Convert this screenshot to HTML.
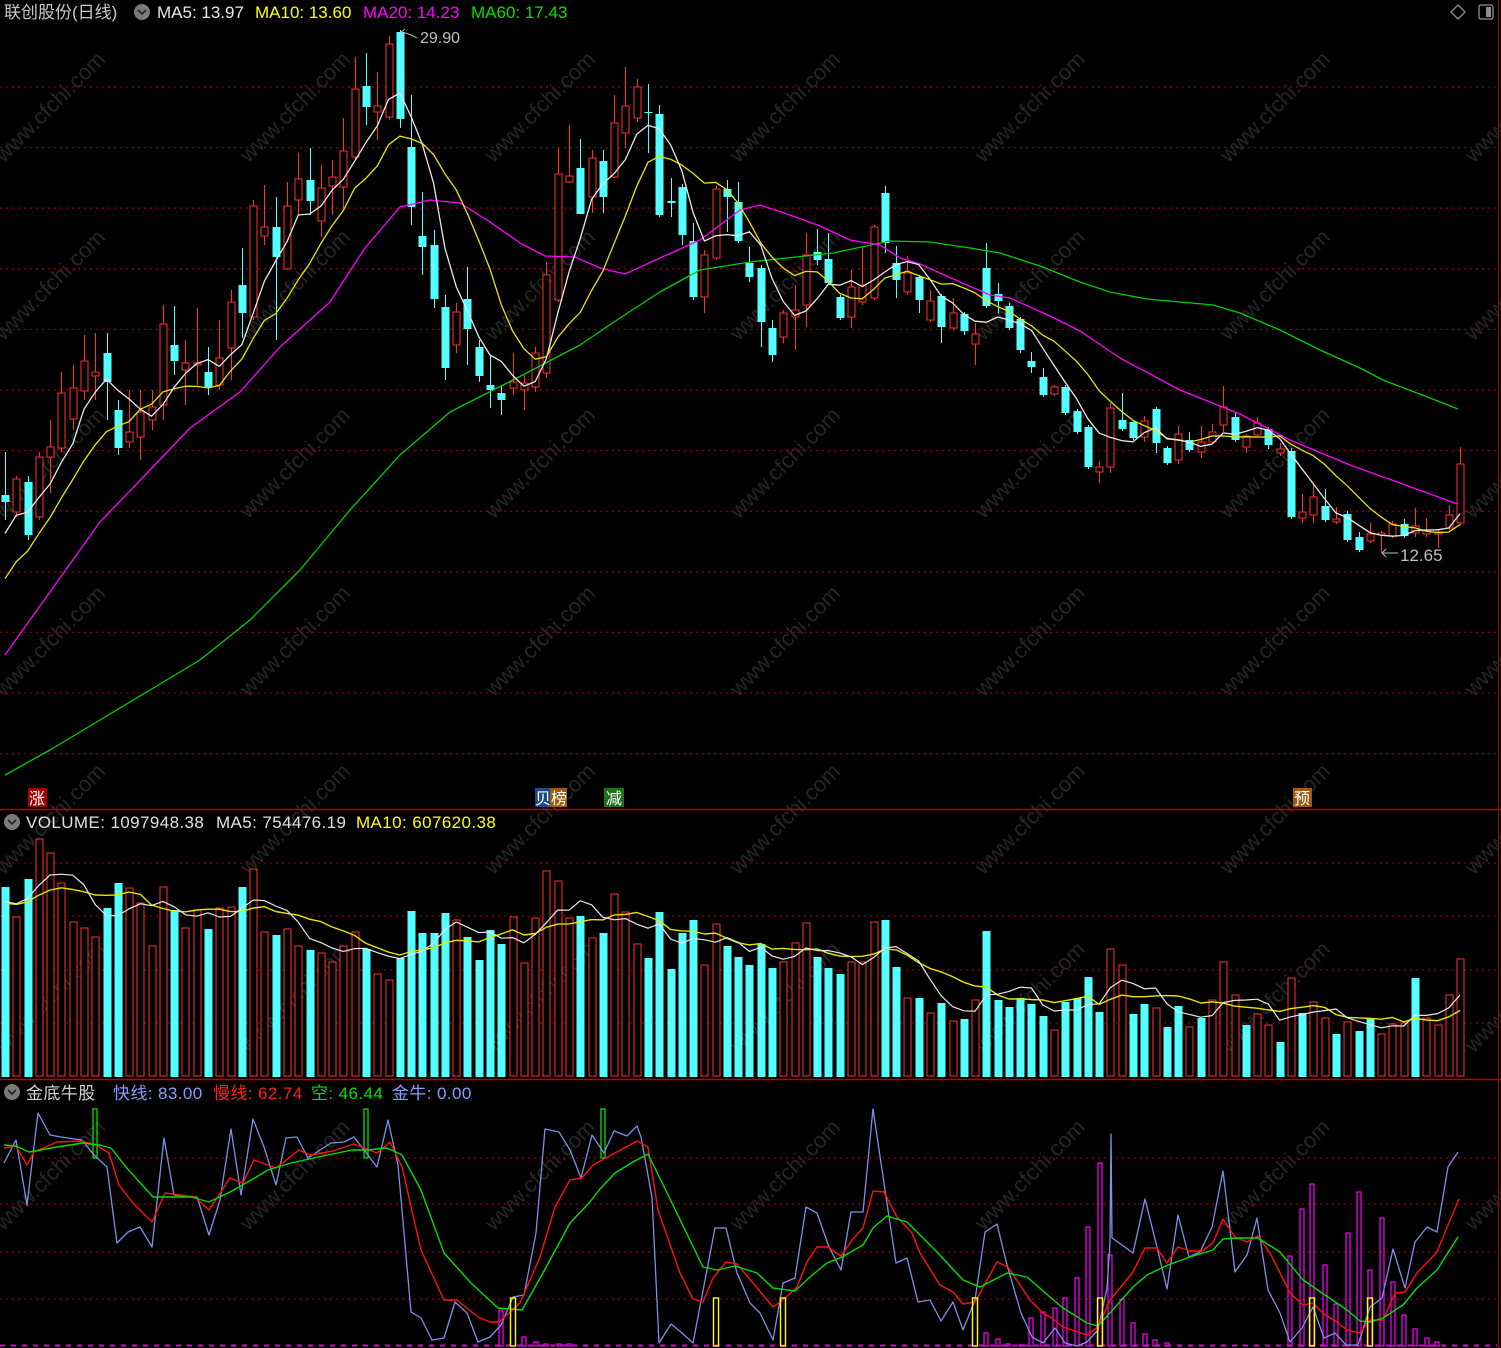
<!DOCTYPE html>
<html><head><meta charset="utf-8"><style>
html,body{margin:0;padding:0;background:#000;width:1501px;height:1348px;overflow:hidden}
svg{display:block}
text{font-family:"Liberation Sans","Noto Sans CJK SC",sans-serif}
</style></head><body>
<svg id="s" xmlns="http://www.w3.org/2000/svg" width="1501" height="1348" viewBox="0 0 1501 1348">
<rect width="1501" height="1348" fill="#000"/>
<g id="wm"></g>
<g id="grid"></g>
<g id="main"></g>
<g id="vol"></g>
<g id="ind"></g>
<line x1="0" y1="809.5" x2="1501" y2="809.5" stroke="#c00000" stroke-width="1.5"/>
<line x1="0" y1="1079.5" x2="1501" y2="1079.5" stroke="#c00000" stroke-width="1.5"/>
<line x1="1498.5" y1="0" x2="1498.5" y2="1348" stroke="#a00000" stroke-width="1"/>
<g font-size="17">
<text x="4" y="18" fill="#c8c8c8">联创股份(日线)</text>
<circle cx="142" cy="12" r="8" fill="#7a7a7a"/><path d="M138 10 L142 14 L146 10" stroke="#222" stroke-width="1.6" fill="none"/>
<text x="157" y="18" fill="#e8e8e8">MA5: 13.97</text>
<text x="255" y="18" fill="#ffff00">MA10: 13.60</text>
<text x="363" y="18" fill="#ff00ff">MA20: 14.23</text>
<text x="471" y="18" fill="#00e000">MA60: 17.43</text>
<circle cx="12" cy="822" r="8" fill="#7a7a7a"/><path d="M8 820 L12 824 L16 820" stroke="#222" stroke-width="1.6" fill="none"/>
<g letter-spacing="0.4">
<text x="26" y="828" fill="#e0e0e0">VOLUME: 1097948.38</text>
<text x="216" y="828" fill="#e0e0e0">MA5: 754476.19</text>
<text x="356" y="828" fill="#ffff00">MA10: 607620.38</text>
</g>
<circle cx="12" cy="1092" r="8" fill="#7a7a7a"/><path d="M8 1090 L12 1094 L16 1090" stroke="#222" stroke-width="1.6" fill="none"/>
<g letter-spacing="0.4">
<text x="26" y="1099" fill="#d0d0d0">金底牛股</text>
<text x="113" y="1099" fill="#8c9cff">快线: 83.00</text>
<text x="213" y="1099" fill="#ff2020">慢线: 62.74</text>
<text x="311" y="1099" fill="#00e000">空: 46.44</text>
<text x="392" y="1099" fill="#8c9cff">金牛: 0.00</text>
</g>
</g>
<path d="M1458 5 L1465 12 L1458 19 L1451 12 Z" stroke="#909090" fill="none" stroke-width="1.3"/>
<rect x="1479" y="5" width="14" height="14" rx="2" stroke="#909090" fill="none" stroke-width="1.3"/><rect x="1486" y="7" width="5" height="10" fill="#909090"/>
<path d="M417 38 Q408 33 401 32" stroke="#c0c0c0" fill="none"/><path d="M401 32 L405 29 M401 32 L404 35" stroke="#c0c0c0"/>
<text x="420" y="43" font-size="16" fill="#c0c0c0">29.90</text>
<path d="M1382 553 L1398 553 M1382 553 L1386 549 M1382 553 L1386 557" stroke="#c0c0c0" fill="none"/>
<text x="1400" y="561" font-size="17" fill="#c0c0c0">12.65</text>
<rect x="28" y="788" width="19" height="19" fill="#a00000"/><text x="29" y="804" font-size="16" fill="#fff">涨</text>
<rect x="535" y="788" width="15" height="19" fill="#1a4a8a"/><rect x="550" y="788" width="17" height="19" fill="#a05a10"/><text x="535" y="804" font-size="16" fill="#fff">贝榜</text>
<rect x="604" y="788" width="20" height="19" fill="#1f6f1f"/><text x="606" y="804" font-size="16" fill="#fff">减</text>
<rect x="1293" y="788" width="19" height="19" fill="#a05a10"/><text x="1294" y="804" font-size="16" fill="#fff">预</text>
</svg>
<script>
(function(){
var NS="http://www.w3.org/2000/svg";
function el(p,t,a){var e=document.createElementNS(NS,t);for(var k in a)e.setAttribute(k,a[k]);p.appendChild(e);return e;}
var G=function(id){return document.getElementById(id)};
var wm=G('wm');
for(var r=0;r<7;r++)for(var c=0;c<7;c++){var cx=55+245*c,cy=112+178*r;
var t=el(wm,'text',{x:cx,y:cy,fill:'#262626','font-size':'22','text-anchor':'middle',transform:'rotate(-45 '+cx+' '+cy+')'});t.textContent='www.cfchi.com';}
var g=G('grid');
function hl(y,col){el(g,'line',{x1:0,x2:1497,y1:y,y2:y,stroke:col||'#8b0000','stroke-width':1.3,'stroke-dasharray':'2,4'});}
for(var k=0;k<12;k++)hl(87+60.6*k);
[863,916,970,1023].forEach(function(y){hl(y)});
[1158,1204,1252,1299].forEach(function(y){hl(y)});
el(g,'line',{x1:0,x2:1497,y1:1345.5,y2:1345.5,stroke:'#e000e0','stroke-width':2,'stroke-dasharray':'5,6'});
var X=function(i){return 5+i*11.28};
var C="c 495 502 452 520|r 479 512 476 517|c 482 535 476 540|r 457 517 452 520|r 447 457 420 493|r 393 448 372 452|r 388 419 365 430|r 361 391 335 400|r 372 376 333 400|c 353 382 333 420|c 410 448 400 455|r 432 442 390 448|r 412 437 390 460|r 407 420 390 430|r 324 405 305 420|c 345 361 306 375|r 363 370 340 405|r 363 365 308 385|c 372 387 347 395|r 358 385 320 390|r 302 348 290 380|c 285 313 248 338|r 206 317 200 320|r 227 236 185 245|c 227 257 197 340|r 206 269 182 270|r 179 200 153 215|c 180 201 148 215|r 188 221 165 237|r 177 186 160 215|r 151 187 118 210|r 89 157 57 160|c 86 107 53 125|r 106 112 72 140|r 44 117 36 120|c 32 119 30 128|c 147 207 95 225|c 236 247 192 275|c 245 299 230 308|c 307 368 295 380|r 312 345 303 353|c 299 329 267 365|c 347 376 340 382|c 385 390 355 408|c 393 400 385 415|r 382 388 353 395|r 383 390 375 410|r 353 387 347 392|r 275 373 262 378|r 174 300 148 302|r 176 182 125 183|c 168 214 139 214|r 158 197 150 213|c 161 197 150 213|r 123 177 95 178|r 106 133 67 148|r 87 118 79 122|c 112 113 84 153|c 114 215 105 217|c 201 203 178 217|c 187 235 184 245|c 241 297 223 300|r 255 297 250 313|r 189 258 186 260|c 189 197 180 232|c 202 241 182 243|c 263 277 247 282|c 268 322 265 347|c 328 355 320 362|r 313 337 310 343|r 310 317 285 350|r 255 305 233 327|c 252 260 229 265|c 259 283 233 285|c 297 318 295 320|r 287 317 270 328|r 285 302 247 305|r 227 298 225 300|c 193 243 186 253|c 263 280 246 298|r 273 292 256 295|c 277 300 275 313|r 301 320 290 322|c 296 327 294 343|r 313 328 298 330|c 314 331 312 335|r 334 344 323 365|c 268 306 243 308|c 294 301 283 313|c 306 328 303 330|c 319 350 317 353|c 361 367 352 373|c 377 395 368 397|r 387 394 385 396|c 387 413 385 415|c 411 432 409 434|c 427 467 425 469|r 467 472 461 483|r 408 467 403 473|c 420 429 393 431|c 422 438 420 440|r 421 437 416 442|c 409 443 407 453|c 448 463 446 465|r 434 460 426 464|c 440 450 432 452|r 442 452 426 458|r 432 442 424 444|r 407 425 386 432|c 417 440 413 442|r 436 447 434 453|r 423 435 417 437|c 429 445 427 449|r 449 453 443 456|c 451 517 448 519|r 512 518 494 523|r 497 515 484 523|c 506 520 489 522|r 519 522 507 524|c 514 540 511 542|c 537 550 532 552|r 534 541 523 543|r 533 535 531 553|r 524 536 521 538|c 524 536 519 538|r 526 533 508 537|r 531 534 518 537|r 532 534 530 548|r 515 528 505 530|r 464 523 447 525".split('|').map(function(s){var a=s.split(' ');return [a[0],+a[1],+a[2],+a[3],+a[4]];});
var RED='#ff3030',CY='#54ffff';
var m=G('main');
function poly(p,pts,col,w){el(p,'polyline',{points:pts.map(function(q){return q[0].toFixed(1)+','+q[1].toFixed(1)}).join(' '),fill:'none',stroke:col,'stroke-width':w||1.2,'stroke-linejoin':'round'});}
var ma20=[[5,655],[50,592],[100,522],[150,470],[190,428],[240,392],[280,347],[330,302],[365,248],[400,207],[430,200],[460,203],[490,222],[520,243],[545,256],[575,257],[600,268],[625,274],[660,258],[700,240],[740,210],[760,205],[790,215],[820,226],[850,240],[880,245],[900,258],[920,264],[960,282],[990,295],[1010,298],[1050,316],[1080,331],[1120,358],[1180,390],[1240,414],[1290,440],[1350,465],[1400,483],[1430,494],[1458,504]];
var ma60=[[5,775],[50,750],[100,720],[150,690],[200,660],[250,620],[300,570],[350,510],[400,455],[450,412],[513,380],[540,366],[580,345],[620,318],[660,292],[700,270],[750,262],[833,253],[890,241],[930,242],[970,248],[1000,253],[1040,266],[1080,282],[1110,292],[1147,299],[1213,305],[1240,313],[1280,330],[1320,350],[1360,368],[1383,380],[1430,398],[1458,409]];
C.forEach(function(d,i){var x=Math.round(X(i))+0.5,t=d[1],b=d[2],h=d[3],l=d[4];if(b-t<1)b=t+1;
if(d[0]=='r'){el(m,'line',{x1:x,x2:x,y1:h,y2:t,stroke:RED});el(m,'line',{x1:x,x2:x,y1:b,y2:l,stroke:RED});el(m,'rect',{x:x-3.5,y:t,width:7,height:b-t,fill:'#000',stroke:RED,'stroke-width':1});}
else{el(m,'line',{x1:x,x2:x,y1:h,y2:l,stroke:CY});el(m,'rect',{x:x-4,y:t,width:8,height:b-t,fill:CY});}});
var cl=C.map(function(d){return d[0]=='r'?d[1]:d[2]});
var pad=[650,640,630,610,590,570,550,530,515];var all=pad.concat(cl);
function ma(arr,n,off){var o=[];for(var i=off;i<arr.length;i++){var s=0;for(var k=0;k<n;k++)s+=arr[i-k];o.push([X(i-off),s/n]);}return o;}
poly(m,ma60,'#00d000',1.3);poly(m,ma20,'#ff00ff',1.3);
poly(m,ma(all,10,9),'#e6e600',1.3);poly(m,ma(all,5,9),'#e8e8e8',1.3);
var V=[887,917,879,839,853,883,922,928,937,908,883,888,903,946,887,910,928,910,929,908,907,887,869,932,935,929,946,950,953,962,946,932,949,974,980,958,911,933,933,913,920,937,960,930,944,917,963,918,871,881,918,916,938,933,894,912,944,958,912,969,933,920,965,924,946,957,965,944,968,962,943,923,957,968,974,962,962,922,920,967,998,998,1013,1003,1021,1019,1000,931,1000,1007,998,1004,1016,1030,1002,998,977,1012,949,965,1014,1004,1008,1027,1006,1027,1018,1000,962,995,1025,1014,1025,1042,978,1013,1002,1018,1034,1022,1031,1018,1034,1024,1023,978,1018,1025,995,959];
var VC="crcrrrrrrccrrrrcrrcrrcrrcrrcrrrrcrrccccc rccccrrrrrrcrcrrrccc ccrrcc cccrrrcccrrrccrcrcrcrccccccrccc crrccrccrcrrrcrrcrcrrcrccrrrcrrrrr".replace(/ /g,'');
var v=G('vol');
V.forEach(function(y,i){var x=Math.round(X(i))+0.5;var c=VC[i]||'r';
if(c=='r')el(v,'rect',{x:x-3.5,y:y,width:7,height:1076-y,fill:'#000',stroke:RED});else el(v,'rect',{x:x-4,y:y,width:8,height:1077-y,fill:CY});});
var vp=[905,905,905,905,905,905,905,905,905].concat(V);
poly(v,ma(vp,10,9),'#e6e600',1.4);poly(v,ma(vp,5,9),'#e8e8e8',1.2);
var ind=G('ind');
function P(s){var a=s.trim().split(/\s+/);return a.map(function(p){var q=p.split(',');return [+q[0],+q[1]]});}
var MB=[[501,1310],[524,1337],[536,1342],[546,1344],[559,1344],[569,1344],[986,1333],[998,1339],[1008,1344],[1021,1345],[1031,1318],[1043,1312],[1055,1308],[1065,1298],[1077,1278],[1088,1227],[1100,1163],[1110,1255],[1122,1299],[1133,1323],[1145,1334],[1155,1340],[1167,1343],[1290,1256],[1302,1209],[1312,1184],[1325,1265],[1336,1304],[1348,1233],[1359,1192],[1370,1270],[1382,1218],[1393,1282],[1404,1315],[1415,1329],[1427,1338],[1437,1342]];
MB.forEach(function(b){el(ind,'rect',{x:b[0]-2,y:b[1],width:4,height:1346-b[1],fill:'none',stroke:'#ff00ff','stroke-width':1.2});});
[95,366,603].forEach(function(x){el(ind,'rect',{x:x-2,y:1109,width:4,height:49,fill:'none',stroke:'#00e000','stroke-width':1.3});});
poly(ind,P("4,1163 16,1140 27,1205 38,1113 50,1135 61,1137 82,1140 94,1155 107,1167 117,1243 128,1232 140,1227 152,1247 164,1138 174,1195 197,1197 209,1235 220,1200 231,1129 241,1195 253,1119 264,1147 276,1185 286,1138 297,1137 308,1158 320,1150 331,1143 344,1142 354,1137 364,1150 377,1167 388,1120 398,1165 411,1312 421,1318 432,1340 444,1338 455,1302 467,1313 478,1342 490,1337 501,1325 513,1297 524,1295 536,1233 545,1129 559,1132 570,1150 581,1178 592,1135 604,1153 614,1131 627,1136 637,1126 641,1137 652,1197 659,1343 671,1324 682,1333 693,1343 715,1228 726,1228 737,1273 750,1303 760,1313 773,1340 783,1283 795,1278 806,1207 817,1213 829,1247 841,1270 851,1212 863,1212 873,1109 885,1190 896,1263 907,1258 918,1302 930,1300 941,1321 953,1302 963,1330 975,1300 985,1232 997,1224 1007,1265 1021,1313 1032,1337 1043,1343 1055,1328 1065,1343 1077,1346 1087,1342 1098,1330 1107,1288 1110,1243 1111,1134 1112,1238 1122,1245 1133,1253 1145,1199 1157,1247 1167,1289 1178,1215 1189,1257 1200,1252 1212,1227 1223,1171 1235,1272 1247,1255 1257,1218 1268,1290 1280,1313 1290,1342 1302,1328 1313,1307 1324,1338 1335,1333 1346,1345 1358,1345 1370,1307 1382,1298 1393,1249 1405,1288 1415,1242 1427,1227 1437,1232 1448,1167 1458,1152"),'#7f8fe8',1.3);
poly(ind,P("4,1148 16,1146 27,1165 34,1152 57,1142 82,1141 96,1145 109,1153 119,1185 132,1202 152,1222 165,1193 195,1197 209,1210 230,1178 243,1183 254,1160 276,1168 299,1150 310,1155 333,1151 354,1144 377,1153 390,1142 402,1167 421,1250 444,1300 457,1300 478,1317 490,1322 499,1322 520,1303 540,1257 555,1207 570,1180 582,1178 593,1165 615,1153 637,1141 648,1147 658,1210 680,1273 693,1299 703,1302 713,1278 726,1262 737,1264 753,1283 773,1307 785,1298 797,1287 807,1262 817,1247 828,1247 841,1256 852,1240 863,1228 873,1191 884,1192 897,1217 912,1233 920,1253 940,1285 953,1292 963,1304 975,1302 997,1262 1008,1267 1030,1300 1043,1313 1050,1317 1063,1327 1087,1335 1098,1327 1110,1300 1120,1288 1133,1272 1145,1248 1157,1248 1167,1263 1178,1247 1190,1251 1202,1251 1213,1243 1223,1219 1235,1237 1247,1242 1258,1236 1270,1253 1290,1293 1303,1305 1313,1303 1325,1315 1337,1322 1347,1330 1360,1333 1370,1320 1383,1320 1395,1293 1405,1292 1417,1273 1437,1252 1448,1225 1459,1199"),'#ff1010',1.4);
poly(ind,P("4,1145 16,1146 29,1152 57,1147 82,1143 100,1145 111,1148 126,1167 153,1197 191,1197 209,1202 230,1192 253,1179 268,1170 291,1163 318,1157 352,1150 367,1150 387,1148 402,1155 421,1190 444,1253 471,1283 498,1308 522,1310 543,1273 570,1223 589,1203 600,1189 615,1173 633,1162 648,1154 672,1203 703,1267 717,1270 735,1266 757,1273 773,1288 795,1291 810,1277 827,1263 842,1257 863,1245 873,1228 887,1216 907,1222 937,1252 963,1280 980,1287 1007,1273 1027,1277 1050,1297 1063,1308 1087,1323 1098,1326 1110,1313 1133,1287 1147,1275 1168,1265 1190,1257 1213,1250 1223,1239 1237,1238 1258,1238 1280,1252 1303,1280 1325,1295 1347,1310 1360,1321 1370,1322 1383,1318 1403,1305 1417,1288 1437,1270 1458,1237"),'#00e000',1.4);
[513,716,783,975,1100,1312,1370].forEach(function(x){el(ind,'rect',{x:x-2.5,y:1298,width:5,height:48,fill:'none',stroke:'#ffff00','stroke-width':1.4});});
})();
</script>
</body></html>
